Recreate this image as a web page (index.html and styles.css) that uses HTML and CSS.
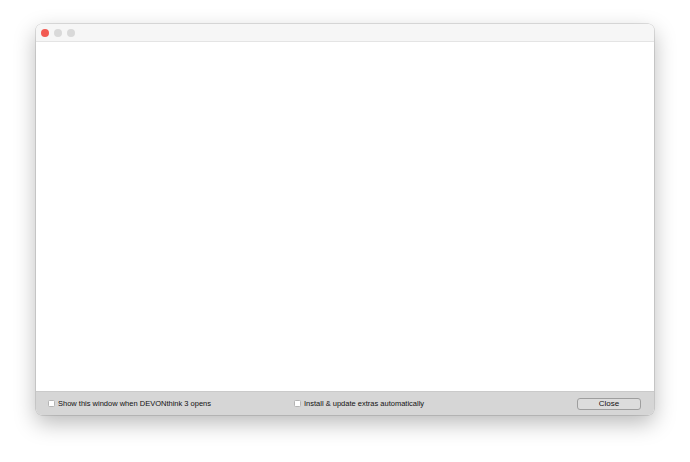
FILE: index.html
```html
<!DOCTYPE html>
<html>
<head>
<meta charset="utf-8">
<link rel="stylesheet" href="styles.css">
</head>
<body>
<div class="window">
  <div class="titlebar">
    <span class="light red"></span>
    <span class="light"></span>
    <span class="light"></span>
  </div>
  <div class="content"></div>
  <div class="footer">
    <label class="check first"><span class="box"></span>Show this window when DEVONthink 3 opens</label>
    <label class="check second"><span class="box"></span>Install &amp; update extras automatically</label>
    <button class="btn">Close</button>
  </div>
</div>
</body>
</html>
```
FILE: styles.css
```css
html, body { margin: 0; padding: 0; background: #ffffff; }
body { width: 690px; height: 462px; overflow: hidden; font-family: "Liberation Sans", Arial, sans-serif; }
.window {
  margin: 24px 0 0 36px;
  width: 618px;
  height: 391px;
  border-radius: 6px;
  overflow: hidden;
  display: flex;
  flex-direction: column;
  box-shadow: 0 0 0 0.5px rgba(0,0,0,0.22), 0 8px 22px rgba(0,0,0,0.28);
  background: #fff;
}
.titlebar {
  height: 18px;
  background: #f6f6f6;
  border-bottom: 1px solid #e4e4e4;
  display: flex;
  align-items: center;
  gap: 5px;
  padding-left: 5px;
  box-sizing: border-box;
}
.light { width: 8px; height: 8px; border-radius: 50%; background: #d9d9d9; }
.light.red { background: #f25a52; }
.content { flex: 1; background: #fff; }
.footer {
  height: 24px;
  background: #d6d6d6;
  border-top: 1px solid #cacaca;
  box-sizing: border-box;
  display: flex;
  align-items: center;
  font-size: 7.5px;
  color: #111;
}
.check { display: flex; align-items: center; gap: 3px; }
.first { margin-left: 12px; }
.second { margin-left: 83px; }
.box { width: 7px; height: 7px; box-sizing: border-box; background: #fff; border: 0.5px solid #b4b4b4; border-radius: 1.5px; }
.btn {
  margin-left: auto;
  margin-right: 13px;
  width: 64px;
  height: 12px;
  padding: 0;
  font-family: inherit;
  font-size: 8px;
  color: #111;
  background: #dcdcdc;
  border: 1px solid #9e9e9e;
  border-radius: 3px;
  line-height: 10px;
}
```
